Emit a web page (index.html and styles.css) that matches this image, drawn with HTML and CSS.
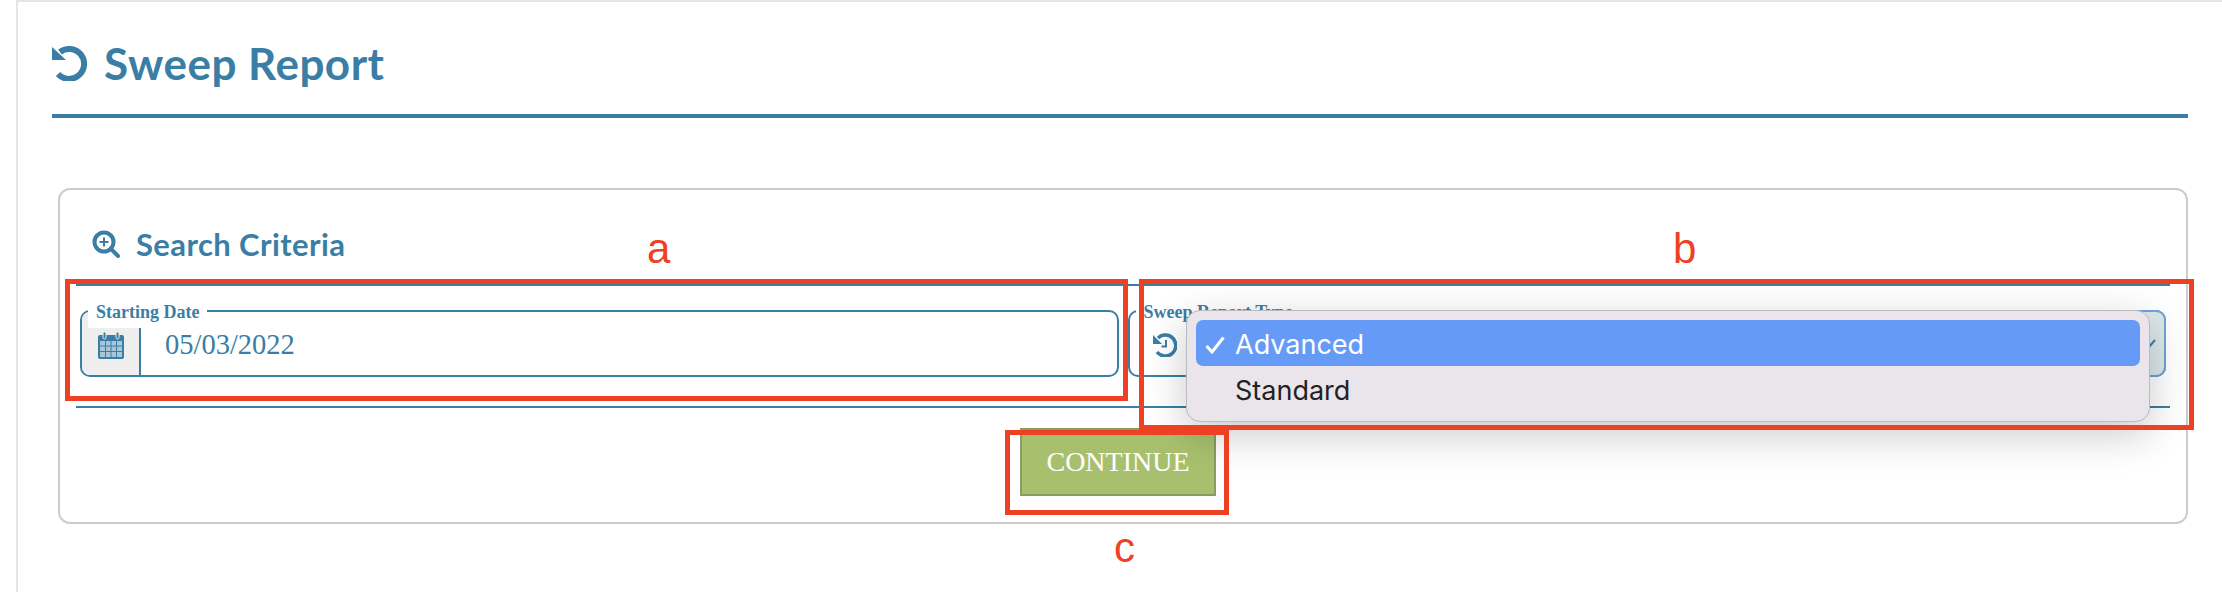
FILE: index.html
```html
<!DOCTYPE html>
<html>

<head>
    <meta charset="utf-8">
    <title>Sweep Report</title>
    <link rel="stylesheet" href="styles.css">
</head>

<body>

    <div class="page">

        <div class="pagehead">
            <svg class="icon-undo" viewBox="0 0 36 36">
                <path d="M8 7 A15 15 0 1 1 6 29" fill="none" stroke="#3a7ea5" stroke-width="6"/>
                <polygon points="0,2 0,15 14,15" fill="#3a7ea5"/>
            </svg>
            <h1>Sweep Report</h1>
        </div>

        <div class="card">
            <div class="cardhead">
                <svg class="icon-search" viewBox="0 0 28 28">
                    <circle cx="12" cy="12" r="9.5" fill="none" stroke="#3a7ea5" stroke-width="4"/>
                    <path d="M19 19 L26 26" stroke="#3a7ea5" stroke-width="4" stroke-linecap="round"/>
                    <path d="M12 7.5 V16.5 M7.5 12 H16.5" stroke="#3a7ea5" stroke-width="2"/>
                </svg>
                <h2>Search Criteria</h2>
            </div>

            <div class="fields">
                <div class="field">
                    <span class="legend">Starting Date</span>
                    <div class="addon addon-grey">
                        <svg class="icon-cal" viewBox="0 0 26 27">
                            <rect x="0" y="3" width="26" height="24" rx="2" fill="#3a7ea5"/>
                            <rect x="5" y="0" width="3" height="7" rx="1.5" fill="#3a7ea5" stroke="#eee"/>
                            <rect x="18" y="0" width="3" height="7" rx="1.5" fill="#3a7ea5" stroke="#eee"/>
                            <path d="M2 9 H24 V25 H2 Z" fill="#a9c6d8"/>
                            <path d="M2 14 H24 M2 19.500 H24 M7.500 9 V25 M13 9 V25 M18.500 9 V25" stroke="#3a7ea5" stroke-width="1"/>
                        </svg>
                    </div>
                    <div class="value">05/03/2022</div>
                </div>

                <div class="field">
                    <span class="legend">Sweep Report Type</span>
                    <div class="addon addon-plain">
                        <svg class="icon-history" viewBox="0 0 24 24">
                            <path d="M5 5 A10.500 10.500 0 1 1 4 19" fill="none" stroke="#3a7ea5" stroke-width="3.500"/>
                            <polygon points="0,2 0,11 9,11" fill="#3a7ea5"/>
                            <path d="M13 7 V13.500 H8.500" fill="none" stroke="#3a7ea5" stroke-width="2"/>
                        </svg>
                    </div>
                    <div class="select">
                        <svg class="chevron" viewBox="0 0 14 10">
                            <path d="M1 2 L7 8 L13 1" fill="none" stroke="#3a7ea5" stroke-width="2"/>
                        </svg>
                    </div>
                </div>
            </div>

            <div class="actions">
                <button class="continue">CONTINUE</button>
            </div>
        </div>

    </div>

    <!-- native select popup -->
    <div class="menu">
        <div class="option option-on">
            <svg class="tick" viewBox="0 0 20 18">
                <path d="M1.500 10 L7 16 L18.500 1.500" fill="none" stroke="#fff" stroke-width="3"/>
            </svg>
            Advanced
        </div>
        <div class="option">Standard</div>
    </div>

    <!-- red annotations drawn on top of the screenshot -->
    <div class="mark mark-a"></div>
    <div class="mark mark-b"></div>
    <div class="mark mark-c"></div>
    <span class="letter letter-a">a</span>
    <span class="letter letter-b">b</span>
    <span class="letter letter-c">c</span>

</body>

</html>
```

FILE: styles.css
```css
html, body{
    margin: 0;
    height: 592px;
    overflow: hidden;
    background: #fff;
}

.page{
    margin-left: 16px;
    height: 590px;
    padding: 0 34px;
    border-top: 2px solid #e5e5e5;
    border-left: 2px solid #e5e5e5;
    color: #3a7ea5;
}

.pagehead{
    display: flex;
    align-items: center;
    gap: 16px;
    height: 112px;
    padding-top: 10px;
    box-sizing: border-box;
    box-shadow: 0 4px 0 #3a7ea5;
}

.pagehead h1{
    margin: 0;
    font-family: Lato, sans-serif;
    font-size: 44px;
    font-weight: 700;
    letter-spacing: 0.5px;
}

.icon-undo{
    width: 36px;
    height: 36px;
}

.card{
    margin: 74px 0 0 6px;
    height: 332px;
    padding: 0 16px;
    border: 2px solid #ccc;
    border-radius: 12px;
}

.cardhead{
    display: flex;
    align-items: center;
    gap: 16px;
    height: 94px;
    padding: 14px 0 0 16px;
    box-sizing: border-box;
}

.cardhead h2{
    margin: 0;
    font-family: Lato, sans-serif;
    font-size: 31px;
    font-weight: 700;
    letter-spacing: 0.4px;
}

.icon-search{
    width: 28px;
    height: 28px;
}

.fields{
    display: flex;
    gap: 9px;
    padding: 24px 4px 29px;
    border-top: 2px solid #3a7ea5;
    border-bottom: 2px solid #3a7ea5;
}

.field{
    position: relative;
    flex: 1;
    display: flex;
    height: 67px;
    box-sizing: border-box;
    border: 2px solid #3a7ea5;
    border-radius: 10px;
}

.legend{
    position: absolute;
    left: 6px;
    top: -10px;
    padding: 0 8px;
    height: 26px;
    background: #fff;
    font-family: "Liberation Serif", serif;
    font-size: 18px;
    font-weight: 700;
    line-height: 21px;
}

.addon{
    display: flex;
    align-items: center;
    justify-content: center;
    width: 59px;
    padding-top: 3px;
    box-sizing: border-box;
}

.addon-grey{
    background: #eee;
    border-right: 2px solid #3a7ea5;
    border-radius: 8px 0 0 8px;
}

.addon-plain{
    justify-content: flex-start;
    padding-left: 23px;
}

.icon-cal{
    width: 26px;
    height: 27px;
}

.icon-history{
    width: 24px;
    height: 24px;
}

.value{
    padding: 17px 0 0 24px;
    font-family: "Liberation Serif", serif;
    font-size: 28.5px;
}

.select{
    flex: 1;
    display: flex;
    align-items: center;
    justify-content: flex-end;
    margin: -2px -2px -2px 0;
    padding-right: 8px;
    background: #dde7ea;
    border: 2px solid #6fa3d8;
    border-radius: 0 10px 10px 0;
}

.chevron{
    width: 14px;
    height: 10px;
}

.actions{
    display: flex;
    justify-content: center;
    padding: 20px 10px 0 0;
}

.continue{
    width: 196px;
    height: 68px;
    padding: 0;
    background: #a8c06e;
    border: 2px solid #8a9c60;
    color: #fff;
    font-family: "Liberation Serif", serif;
    font-size: 28px;
}

.menu{
    position: absolute;
    left: 1186px;
    top: 310px;
    width: 964px;
    height: 112px;
    padding: 9px;
    box-sizing: border-box;
    background: #e9e5ea;
    border: 1px solid #bdbabd;
    border-radius: 14px;
    box-shadow: 0 12px 40px rgba(0, 0, 0, 0.22);
    font-family: Inter, sans-serif;
    font-size: 27px;
    color: #222;
}

.option{
    height: 46px;
    line-height: 49px;
    padding-left: 39px;
    position: relative;
}

.option-on{
    background: #659bf6;
    border-radius: 7px;
    color: #fff;
}

.tick{
    position: absolute;
    left: 9px;
    top: 16px;
    width: 20px;
    height: 18px;
}

.mark{
    position: absolute;
    box-sizing: border-box;
    border: 5px solid #ee4023;
}

.mark-a{
    left: 65px;
    top: 279px;
    width: 1063px;
    height: 122px;
}

.mark-b{
    left: 1139px;
    top: 279px;
    width: 1055px;
    height: 151px;
}

.mark-c{
    left: 1005px;
    top: 430px;
    width: 224px;
    height: 85px;
}

.letter{
    position: absolute;
    font-family: "Liberation Sans", sans-serif;
    font-size: 42px;
    line-height: 42px;
    color: #ee4023;
}

.letter-a{
    left: 647px;
    top: 228px;
}

.letter-b{
    left: 1673px;
    top: 228px;
}

.letter-c{
    left: 1114px;
    top: 527px;
}
```
